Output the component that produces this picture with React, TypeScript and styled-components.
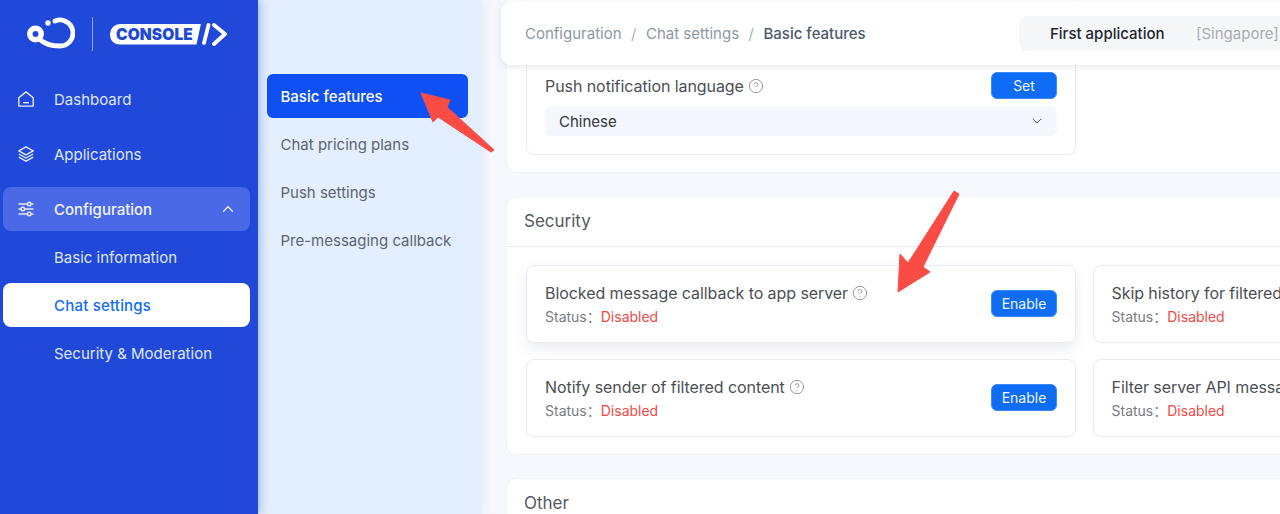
import React from "react";
import styled, { createGlobalStyle } from "styled-components";
import { ChevronDown, ChevronUp, CircleHelp } from "lucide-react";

const GlobalStyle = createGlobalStyle`
  html, body {
    margin: 0;
    padding: 0;
    width: 1280px;
    height: 514px;
    overflow: hidden;
    background: #f5f8fd;
    font-family: Inter, "Noto Sans CJK SC", "Noto Sans", sans-serif;
  }
  * { box-sizing: border-box; }
`;

const Page = styled.div`
  position: relative;
  display: flex;
  width: 1280px;
  height: 514px;
  overflow: hidden;
`;

const Sidebar = styled.aside`
  position: relative;
  z-index: 2;
  flex: 0 0 258px;
  padding: 0 8px 0 3px;
  background: #2149d9;
  box-shadow: 2px 0 9px rgba(33, 73, 217, 0.35);
`;

const LogoBar = styled.div`
  display: flex;
  align-items: center;
  height: 68px;
  padding-left: 24px;
  margin-bottom: 9px;
`;

const Divider = styled.span`
  width: 1px;
  height: 34px;
  margin: 0 17px 0 17px;
  background: rgba(255, 255, 255, 0.5);
`;

const ConsoleBadge = styled.span`
  display: block;
  width: 91px;
  height: 21px;
  padding-left: 6px;
  border-radius: 10px 0 0 10px;
  background: #fff;
  color: #2149d9;
  font-size: 15.5px;
  font-weight: 900;
  line-height: 21px;
  letter-spacing: 0.1px;
  clip-path: polygon(0 0, 100% 0, 95% 100%, 0 100%);
`;

const NavList = styled.nav`
  display: flex;
  flex-direction: column;
`;

const NavItem = styled.div<{ $active?: boolean; $gap?: number }>`
  display: flex;
  align-items: center;
  height: 44px;
  margin-bottom: ${(p) => p.$gap ?? 11}px;
  padding: 0 13px 0 15px;
  border-radius: 8px;
  background: ${(p) => (p.$active ? "#4a69e6" : "transparent")};
  color: ${(p) => (p.$active ? "#f1f4ff" : "#dfe6fb")};
  font-size: 15px;
  font-weight: ${(p) => (p.$active ? 500 : 400)};
  svg.lead {
    flex: 0 0 16px;
    margin-right: 20px;
  }
  svg.trail {
    margin-left: auto;
    color: #eef2ff;
  }
`;

const SubNavItem = styled.div<{ $active?: boolean }>`
  display: flex;
  align-items: center;
  height: 44px;
  margin-bottom: 4px;
  padding-left: 51px;
  border-radius: 8px;
  background: ${(p) => (p.$active ? "#fff" : "transparent")};
  color: ${(p) => (p.$active ? "#0f6cf5" : "#dfe6fb")};
  font-size: 15px;
  font-weight: ${(p) => (p.$active ? 500 : 400)};
  letter-spacing: ${(p) => (p.$active ? "0.2px" : "0")};
`;

const SubMenu = styled.aside`
  position: relative;
  z-index: 1;
  flex: 0 0 223px;
  padding: 74px 13px 0 9px;
  background: #e3eeff;
  box-shadow: 2px 0 8px rgba(210, 222, 245, 0.5);
`;

const SubMenuItem = styled.div<{ $active?: boolean }>`
  display: flex;
  align-items: center;
  height: 44px;
  margin-bottom: 4px;
  padding-left: 13.500px;
  border-radius: 6px;
  background: ${(p) => (p.$active ? "#0f50f5" : "transparent")};
  color: ${(p) => (p.$active ? "#fff" : "#5d6570")};
  font-size: 15px;
  font-weight: ${(p) => (p.$active ? 500 : 400)};
`;

const Main = styled.main`
  position: relative;
  flex: 1;
  min-width: 0;
  overflow: hidden;
  padding-left: 25px;
  background: #f5f8fd;
`;

const TopBar = styled.header`
  position: absolute;
  z-index: 3;
  top: 1px;
  left: 20px;
  width: 900px;
  height: 64px;
  display: flex;
  align-items: center;
  padding-left: 24px;
  border-radius: 10px;
  background: #fff;
  box-shadow: 0 2px 6px rgba(120, 130, 170, 0.18);
`;

const Crumb = styled.span<{ $current?: boolean }>`
  color: ${(p) => (p.$current ? "#4c5a6c" : "#8c97a6")};
  font-size: 15px;
  font-weight: ${(p) => (p.$current ? 500 : 400)};
`;

const CrumbSep = styled.span`
  margin: 0 9.500px;
  color: #a9b2be;
  font-size: 15px;
`;

const AppPicker = styled.div`
  position: absolute;
  top: 15px;
  left: 518px;
  display: flex;
  align-items: center;
  width: 300px;
  height: 35px;
  padding-left: 31px;
  border-radius: 8px;
  background: #f6f7f9;
`;

const AppName = styled.span`
  width: 146px;
  color: #1f2530;
  font-size: 15px;
  font-weight: 500;
`;

const AppRegion = styled.span`
  color: #a9abb0;
  font-size: 15px;
`;

const Content = styled.div`
  display: flex;
  flex-direction: column;
  gap: 23px;
  width: 1170px;
`;

const Panel = styled.section`
  border: 1px solid #f0f2f8;
  border-radius: 10px;
  background: #fff;
`;

const TopPanel = styled(Panel)`
  height: 173px;
  padding: 0 19px;
  border-top: 0;
  border-radius: 0 0 10px 10px;
`;

const PanelHead = styled.h2`
  display: flex;
  align-items: center;
  height: 50px;
  margin: 0;
  padding: 0 0 2px 17px;
  border-bottom: 1px solid #e8eaf3;
  color: #555a60;
  font-size: 17px;
  font-weight: 400;
`;

const PanelBody = styled.div`
  display: grid;
  grid-template-columns: 550px 550px;
  gap: 16px 16.500px;
  padding: 18px 19px 17px;
`;

const Card = styled.div<{ $raised?: boolean }>`
  display: flex;
  align-items: center;
  justify-content: space-between;
  height: 78px;
  padding: 0 18px;
  border: 1px solid #e8eaf0;
  border-radius: 8px;
  background: #fff;
  box-shadow: ${(p) => (p.$raised ? "0 6px 14px rgba(120, 130, 170, 0.14)" : "none")};
  button {
    margin-bottom: 2px;
  }
`;

const CardText = styled.div`
  padding-top: 1px;
`;

const PushCard = styled.div`
  display: flex;
  flex-direction: column;
  width: 550px;
  height: 155px;
  padding: 72px 18px 0;
  border: 1px solid #e8eaf0;
  border-radius: 0 0 8px 8px;
  border-top: 0;
`;

const PushRow = styled.div`
  display: flex;
  align-items: center;
  justify-content: space-between;
  margin-bottom: 7px;
`;

const CardTitle = styled.div`
  display: flex;
  align-items: center;
  gap: 4px;
  height: 20px;
  color: #4c4f54;
  font-size: 16px;
  line-height: 20px;
  letter-spacing: -0.07px;
  white-space: nowrap;
  svg { color: #85888c; }
`;

const CardStatus = styled.div`
  height: 18px;
  margin-top: 5px;
  color: #797c80;
  font-size: 14px;
  line-height: 18px;
  white-space: nowrap;
`;

const Disabled = styled.span`
  color: #f04a44;
`;

const BlueButton = styled.button`
  width: 66px;
  height: 27px;
  padding: 0;
  border: 1px solid #3d8bff;
  border-radius: 6px;
  background: #0f6cf5;
  color: #eef5ff;
  font-family: inherit;
  font-size: 14px;
`;

const Select = styled.div`
  display: flex;
  align-items: center;
  justify-content: space-between;
  height: 30px;
  padding: 0 12px 0 14px;
  border-radius: 6px;
  background: #f4f7fd;
  color: #33363b;
  font-size: 15px;
  svg { color: #4f565f; }
`;

const Arrow = styled.svg`
  position: absolute;
  z-index: 5;
  top: 0;
  left: 0;
  pointer-events: none;
`;

const Logo = () => (
  <svg width="48" height="36" viewBox="0 0 48 36" fill="none">
    <circle cx="8.500" cy="18" r="5.700" stroke="#fff" strokeWidth="5.500" />
    <path
      d="M13 23.500c3.500 3.500 11 6.500 20 6.500a13 13 0 1 0-5-25"
      stroke="#fff"
      strokeWidth="4.800"
      strokeLinecap="round"
    />
    <circle cx="21" cy="7" r="2.700" fill="#fff" />
  </svg>
);

const ConsoleMark = () => (
  <svg width="30" height="24" viewBox="0 0 30 24" fill="none">
    <path d="M3 21 7.500 3M13 3l11 9-11 10" stroke="#fff" strokeWidth="3.800" strokeLinecap="round" strokeLinejoin="round" />
  </svg>
);

const HomeIcon = () => (
  <svg className="lead" width="16" height="16" viewBox="0 0 16 16" fill="none" stroke="#e6ebfc" strokeWidth="1.400">
    <path d="M.8 6.800 8 .9l7.200 5.900v8.300H.8z" strokeLinejoin="round" />
    <path d="M5 11.700h6" />
  </svg>
);

const LayersIcon = () => (
  <svg className="lead" width="16" height="16" viewBox="0 0 16 16" fill="none" stroke="#e6ebfc" strokeWidth="1.400" strokeLinejoin="round">
    <path d="M8 .8 15.200 4.800 8 8.800.8 4.800z" />
    <path d="M.8 8 8 12l7.200-4" />
    <path d="M.8 11.200 8 15.200l7.200-4" />
  </svg>
);

const SlidersIcon = () => (
  <svg className="lead" width="16" height="16" viewBox="0 0 16 16" fill="none" stroke="#e6ebfc" strokeWidth="1.400">
    <path d="M.5 3h9M13 3h2.500M.5 8h2.500M6.500 8h9M.5 13h9M13 13h2.500" />
    <circle cx="11.200" cy="3" r="1.800" />
    <circle cx="4.800" cy="8" r="1.800" />
    <circle cx="11.200" cy="13" r="1.800" />
  </svg>
);

const Help = () => <CircleHelp size={16} strokeWidth={1.300} />;

const FeatureCard = ({ title, help, raised }: { title: string; help?: boolean; raised?: boolean }) => (
  <Card $raised={raised}>
    <CardText>
      <CardTitle>
        {title}
        {help && <Help />}
      </CardTitle>
      <CardStatus>
        Status：<Disabled>Disabled</Disabled>
      </CardStatus>
    </CardText>
    <BlueButton>Enable</BlueButton>
  </Card>
);

export default function App() {
  return (
    <Page>
      <GlobalStyle />
      <Sidebar>
        <LogoBar>
          <Logo />
          <Divider />
          <ConsoleBadge>CONSOLE</ConsoleBadge>
          <ConsoleMark />
        </LogoBar>
        <NavList>
          <NavItem>
            <HomeIcon />
            Dashboard
          </NavItem>
          <NavItem>
            <LayersIcon />
            Applications
          </NavItem>
          <NavItem $active $gap={4}>
            <SlidersIcon />
            Configuration
            <ChevronUp className="trail" size={18} strokeWidth={1.600} />
          </NavItem>
          <SubNavItem>Basic information</SubNavItem>
          <SubNavItem $active>Chat settings</SubNavItem>
          <SubNavItem>Security &amp; Moderation</SubNavItem>
        </NavList>
      </Sidebar>

      <SubMenu>
        <SubMenuItem $active>Basic features</SubMenuItem>
        <SubMenuItem>Chat pricing plans</SubMenuItem>
        <SubMenuItem>Push settings</SubMenuItem>
        <SubMenuItem>Pre-messaging callback</SubMenuItem>
      </SubMenu>

      <Main>
        <TopBar>
          <Crumb>Configuration</Crumb>
          <CrumbSep>/</CrumbSep>
          <Crumb>Chat settings</Crumb>
          <CrumbSep>/</CrumbSep>
          <Crumb $current>Basic features</Crumb>
          <AppPicker>
            <AppName>First application</AppName>
            <AppRegion>[Singapore]</AppRegion>
          </AppPicker>
        </TopBar>
        <Content>
          <TopPanel>
            <PushCard>
              <PushRow>
                <CardTitle>
                  Push notification language
                  <Help />
                </CardTitle>
                <BlueButton>Set</BlueButton>
              </PushRow>
              <Select>
                Chinese
                <ChevronDown size={16} strokeWidth={1.500} />
              </Select>
            </PushCard>
          </TopPanel>
          <Panel>
            <PanelHead>Security</PanelHead>
            <PanelBody>
              <FeatureCard title="Blocked message callback to app server" help raised />
              <FeatureCard title="Skip history for filtered messages" />
              <FeatureCard title="Notify sender of filtered content" help />
              <FeatureCard title="Filter server API messages" />
            </PanelBody>
          </Panel>
          <Panel>
            <PanelHead>Other</PanelHead>
          </Panel>
        </Content>
      </Main>

      <Arrow width="1280" height="514" viewBox="0 0 1280 514">
        <path
          d="M421 93 450 100 447 107 494 150 491 152 438 117 433 122z"
          fill="#fb4b45"
          stroke="#fb4b45"
          strokeWidth="1"
          strokeLinejoin="round"
        />
        <path
          d="M898 292 900 254 908 263 954 191 959 194 923 267 930 272z"
          fill="#fb4b45"
          stroke="#fb4b45"
          strokeWidth="1"
          strokeLinejoin="round"
        />
      </Arrow>
    </Page>
  );
}
